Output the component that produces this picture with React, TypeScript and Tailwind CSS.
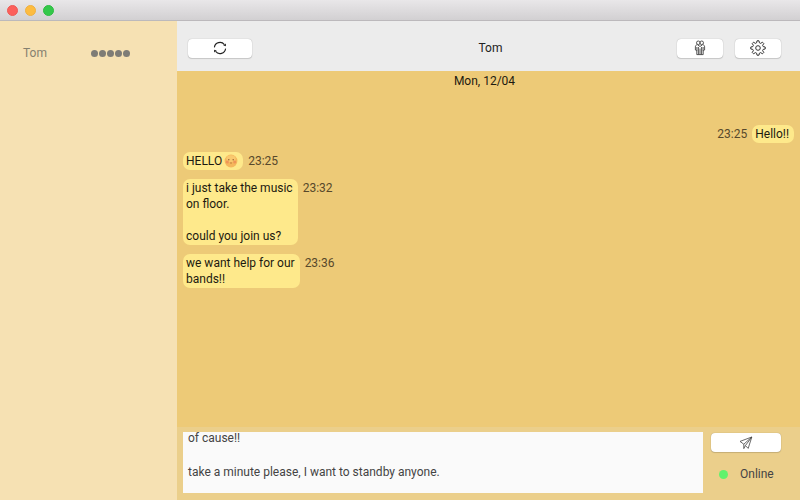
import { useEffect, useRef, useState } from "react";
import type { ReactNode } from "react";

type Message = { id: number; time: string; text: string; own?: boolean; face?: boolean };

const messages: Message[] = [
  { id: 1, time: "23:25", text: "Hello!!", own: true },
  { id: 2, time: "23:25", text: "HELLO", face: true },
  { id: 3, time: "23:32", text: "i just take the music\non floor.\n\ncould you join us?" },
  { id: 4, time: "23:36", text: "we want help for our\nbands!!" },
];

function RefreshIcon() {
  return (
    <svg viewBox="0 0 14 14" className="h-3.5 w-3.5" fill="none" stroke="#222" strokeWidth="1.1">
      <path d="M1.4 6.4A5.6 5.6 0 0 1 11.4 3.6" />
      <path d="M12.6 7.6A5.6 5.6 0 0 1 2.6 10.4" />
      <path d="M12.9 2.6v2.6l-2.6-.7zM1.1 11.4V8.8l2.6.7z" fill="#222" stroke="none" />
    </svg>
  );
}

function PeopleIcon() {
  return (
    <svg viewBox="0 0 12 16" className="h-4 w-3" fill="none" stroke="#444" strokeWidth="0.9">
      <circle cx="4.3" cy="2.8" r="1.8" />
      <circle cx="7.7" cy="2.8" r="1.8" />
      <path d="M3 4.8C1.8 5 1.4 5.8 1.4 7v3l1.4.8v3.8h6.4v-3.8l1.4-.8V7c0-1.2-.4-2-1.6-2.2" />
      <path d="M4.4 7v7.6M7.6 7v7.6M6 8.5v6M3.5 4.8L6 6.5l2.5-1.7M2.9 7v4M9.1 7v4" />
    </svg>
  );
}

function GearIcon() {
  return (
    <svg viewBox="0 0 16 16" className="h-4 w-4" fill="none" stroke="#333" strokeWidth="1" strokeLinejoin="round">
      <path d="M7 .8h2l.4 2 1.3.6 1.7-1.2 1.4 1.4-1.2 1.7.6 1.3 2 .4v2l-2 .4-.6 1.3 1.2 1.7-1.4 1.4-1.7-1.2-1.3.6-.4 2H7l-.4-2-1.3-.6-1.7 1.2-1.4-1.4 1.2-1.7-.6-1.3-2-.4V7l2-.4.6-1.3-1.2-1.7 1.4-1.4 1.7 1.2 1.3-.6z" />
      <circle cx="8" cy="8" r="2.3" />
    </svg>
  );
}

function SendIcon() {
  return (
    <svg viewBox="0 0 14 14" className="h-3.5 w-3.5" fill="none" stroke="#444" strokeWidth="0.8" strokeLinejoin="round">
      <path d="M12.8 1L1 5.4l3.8 2.8L12.8 1 6.4 9.6l2.8 2.8zM4.8 8.2v4.4l1.6-3" />
    </svg>
  );
}

function FaceIcon() {
  return (
    <svg viewBox="0 0 14 14" className="ml-0.5 h-3.5 w-3.5" role="img" aria-label="smiling face">
      <circle cx="7" cy="7" r="6.4" fill="#f5b75c" />
      <ellipse cx="7" cy="4.6" rx="4.6" ry="3.4" fill="#f9c96f" />
      <circle cx="3.3" cy="8" r="1.5" fill="#ef9557" />
      <circle cx="10.7" cy="8" r="1.5" fill="#ef9557" />
      <path d="M6 8.9q1 .4 2 0" fill="none" stroke="#a96a32" strokeWidth="0.7" />
      <circle cx="4.8" cy="5.8" r="0.7" fill="#94592b" />
      <circle cx="9.2" cy="5.8" r="0.7" fill="#94592b" />
    </svg>
  );
}

function PushButton({ label, width, children }: { label: string; width: string; children: ReactNode }) {
  return (
    <button
      type="button"
      aria-label={label}
      className={`flex h-[19px] items-center justify-center rounded-[4px] bg-white shadow-[0_0_1px_#00000055,0_1px_1px_#00000022] ${width}`}
    >
      {children}
    </button>
  );
}

function Bubble({ message }: { message: Message }) {
  return (
    <li className={`flex items-start gap-[5px] ${message.own ? "flex-row-reverse" : ""}`}>
      <p className="flex items-center rounded-[7px] bg-[#fee98b] py-px pr-[5px] pl-[3px] whitespace-pre text-[#1d1a10]">
        {message.text}
        {message.face && <FaceIcon />}
      </p>
      <time className="py-px text-[#57482b]">{message.time}</time>
    </li>
  );
}

export default function App() {
  const [draft, setDraft] = useState("of cause!!\n\ntake a minute please, I want to standby anyone.\n");
  const draftBox = useRef<HTMLTextAreaElement>(null);

  useEffect(() => {
    if (draftBox.current) draftBox.current.scrollTop = 2;
  }, []);

  return (
    <div className="flex h-screen flex-col overflow-hidden bg-[#edca77] font-['Roboto','Liberation_Sans',sans-serif] text-[12px] leading-4">
      <header className="flex h-[21px] shrink-0 items-center gap-[7px] border-b border-[#bcb9bc] bg-linear-to-b from-[#e9e7e9] to-[#d2d0d2] px-[7px]">
        <button type="button" aria-label="Close" className="h-[11px] w-[11px] rounded-full border border-[#ee5a55] bg-[#fc605b]" />
        <button type="button" aria-label="Minimize" className="h-[11px] w-[11px] rounded-full border border-[#efb140] bg-[#fdbc40]" />
        <button type="button" aria-label="Zoom" className="h-[11px] w-[11px] rounded-full border border-[#2ebc41] bg-[#34c84a]" />
      </header>

      <div className="flex min-h-0 flex-1">
        <aside className="w-[177px] shrink-0 bg-[#f6e1b3] pt-6 pl-[23px] text-[#85806f]">
          <div className="flex items-center">
            <span className="w-[68px]">Tom</span>
            <span className="flex gap-px" role="img" aria-label="5 unread">
              {[0, 1, 2, 3, 4].map((dot) => (
                <span key={dot} className="h-[7px] w-[7px] rounded-full bg-[#7e7c76]" />
              ))}
            </span>
          </div>
        </aside>

        <main className="flex min-w-0 flex-1 flex-col">
          <div className="grid h-[50px] shrink-0 grid-cols-[1fr_auto_1fr] items-center bg-[#ececec] pt-1 pr-[19px] pl-[11px]">
            <PushButton label="Refresh" width="w-16"><RefreshIcon /></PushButton>
            <h1 className="pl-3 text-[#222]">Tom</h1>
            <div className="flex justify-end gap-3">
              <PushButton label="Members" width="w-[46px]"><PeopleIcon /></PushButton>
              <PushButton label="Settings" width="w-[46px]"><GearIcon /></PushButton>
            </div>
          </div>

          <section className="min-h-0 flex-1 overflow-hidden px-1.5 pt-0.5">
            <h2 className="pr-2 text-center text-[#1d1a10]">Mon, 12/04</h2>
            <ul className="mt-9 flex flex-col gap-[9px]">
              {messages.map((message) => (
                <Bubble key={message.id} message={message} />
              ))}
            </ul>
          </section>

          <form className="flex h-[73px] shrink-0 gap-2 bg-[#ebcf8b] pt-[5px] pr-[19px] pb-[7px] pl-1.5" onSubmit={(event) => event.preventDefault()}>
            <textarea
              ref={draftBox}
              aria-label="Message"
              value={draft}
              onChange={(event) => setDraft(event.target.value)}
              className="min-w-0 flex-1 resize-none bg-[#fafafa] px-[5px] leading-[17px] text-[#444] outline-none [scrollbar-width:none]"
            />
            <div className="flex w-[70px] flex-col gap-3.5 pt-px">
              <PushButton label="Send" width="w-full"><SendIcon /></PushButton>
              <p className="flex items-center gap-3 pl-2 text-[#444]">
                <span className="h-[9px] w-[9px] rounded-full bg-[#62f26c]" />
                Online
              </p>
            </div>
          </form>
        </main>
      </div>
    </div>
  );
}
